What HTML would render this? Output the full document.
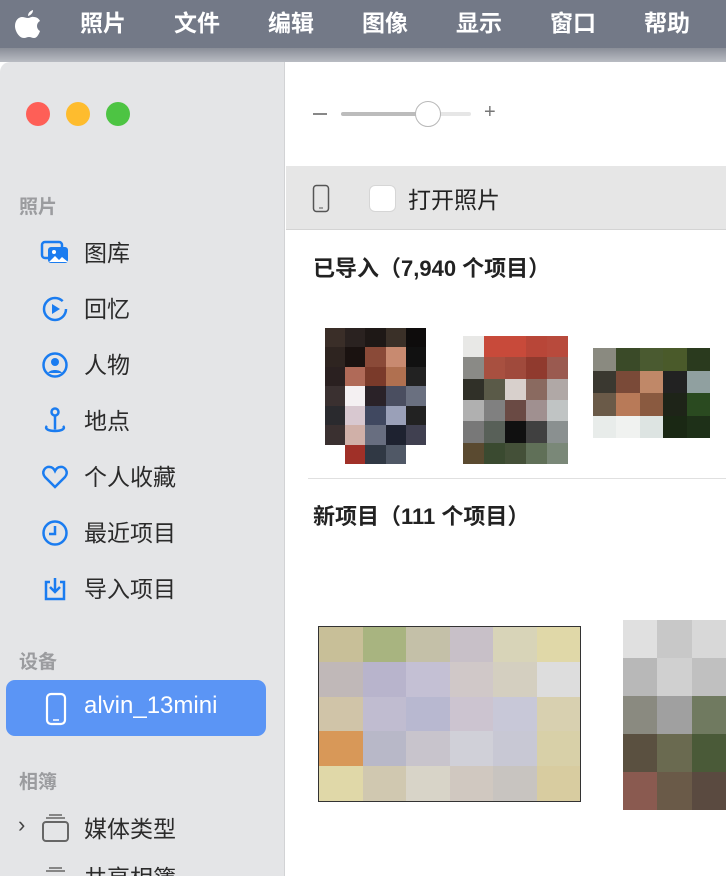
<!DOCTYPE html>
<html><head><meta charset="utf-8"><style>
*{margin:0;padding:0;box-sizing:border-box}
html,body{width:726px;height:876px;overflow:hidden}
body{position:relative;background:#fff;font-family:"Liberation Sans","Noto Sans CJK SC",sans-serif}
.menu{position:absolute;left:0;top:0;width:726px;height:48px;background:#737987;color:#fff;font-size:23px;font-weight:bold}
.menu span{position:absolute;top:4px}
.strip{position:absolute;left:0;top:48px;width:726px;height:14px;background:linear-gradient(#8a8e98,#b9bcc3)}
.side{position:absolute;left:0;top:62px;width:285px;height:814px;background:#e4e5e7;border-right:1px solid #d2d3d5;border-top-left-radius:10px}
.dot{position:absolute;top:102px;width:24px;height:24px;border-radius:50%}
.sec{position:absolute;left:19px;font-size:19px;color:#9b9c9f;font-weight:bold}
.item{position:absolute;left:84px;font-size:23px;color:#2b2b2b}
.ic{position:absolute;left:40px;width:30px;height:30px}
.main{position:absolute;left:286px;top:62px;width:440px;height:814px;background:#fff}
.bar{position:absolute;left:286px;top:166px;width:440px;height:64px;background:#e6e6e6;border-bottom:1px solid #d4d4d4}
h2{position:absolute;font-size:22px;font-weight:bold;color:#222}
.px{position:absolute;display:grid}
.px i{display:block}
</style></head><body>
<div class="menu">
<svg style="position:absolute;left:13px;top:8px" width="30" height="32" viewBox="0 0 30 32"><path fill="#fff" d="M20 2c0 3-2 5-5 6 0-3 2-5 5-6zM15 10c2 0 4-2 6-1 3 0 5 2 6 4-4 2-4 8 0 10-1 3-3 7-6 7-2 0-3-1-5-1s-3 1-5 1C6 30 2 23 2 18 2 12 6 9 9 9c2 0 4 1 6 1z"/></svg>
<span style="left:80px">照片</span><span style="left:174px">文件</span><span style="left:268px">编辑</span><span style="left:362px">图像</span><span style="left:456px">显示</span><span style="left:550px">窗口</span><span style="left:644px">帮助</span>
</div>
<div class="strip"></div>
<div class="side"></div>
<div class="dot" style="left:26px;background:#fe5f57"></div>
<div class="dot" style="left:66px;background:#febc2e"></div>
<div class="dot" style="left:106px;background:#4dc443"></div>
<div class="sec" style="top:192px">照片</div>
<svg class="ic" style="top:238px" viewBox="0 0 30 30"><rect x="2" y="4" width="20" height="16" rx="3" fill="none" stroke="#1a7cf0" stroke-width="2.5"/><rect x="8" y="9" width="20" height="16" rx="3" fill="#1a7cf0"/><circle cx="14" cy="14" r="2" fill="#fff"/><path d="M9 24l6-6 4 4 3-3 6 5z" fill="#fff"/></svg>
<div class="item" style="top:234px">图库</div>
<svg class="ic" style="top:294px" viewBox="0 0 30 30"><circle cx="15" cy="15" r="11" fill="none" stroke="#1a7cf0" stroke-width="2.5" stroke-dasharray="60 9"/><path d="M12 10v10l8-5z" fill="#1a7cf0"/></svg>
<div class="item" style="top:290px">回忆</div>
<svg class="ic" style="top:350px" viewBox="0 0 30 30"><circle cx="15" cy="15" r="11.5" fill="none" stroke="#1a7cf0" stroke-width="2.5"/><circle cx="15" cy="12" r="4" fill="#1a7cf0"/><path d="M8 23c2-4 12-4 14 0" fill="#1a7cf0"/></svg>
<div class="item" style="top:346px">人物</div>
<svg class="ic" style="top:406px" viewBox="0 0 30 30"><circle cx="15" cy="6" r="3.5" fill="none" stroke="#1a7cf0" stroke-width="2.5"/><path d="M15 9.5v14M7 20c-3 3 2 5 8 5s11-2 8-5" fill="none" stroke="#1a7cf0" stroke-width="2.5"/></svg>
<div class="item" style="top:402px">地点</div>
<svg class="ic" style="top:462px" viewBox="0 0 30 30"><path d="M15 25L5 15C1 10 5 4 10 5c2 0 4 2 5 4 1-2 3-4 5-4 5-1 9 5 5 10z" fill="none" stroke="#1a7cf0" stroke-width="2.5"/></svg>
<div class="item" style="top:458px">个人收藏</div>
<svg class="ic" style="top:518px" viewBox="0 0 30 30"><circle cx="15" cy="15" r="11.5" fill="none" stroke="#1a7cf0" stroke-width="2.5"/><path d="M15 8v8h-6" fill="none" stroke="#1a7cf0" stroke-width="2.5"/></svg>
<div class="item" style="top:514px">最近项目</div>
<svg class="ic" style="top:574px" viewBox="0 0 30 30"><path d="M10 8H6v17h18V8h-4M15 4v14M10 13l5 5 5-5" fill="none" stroke="#1a7cf0" stroke-width="2.5"/></svg>
<div class="item" style="top:570px">导入项目</div>
<div class="sec" style="top:647px">设备</div>
<div style="position:absolute;left:6px;top:680px;width:260px;height:56px;border-radius:9px;background:#5b95f5"></div>
<svg style="position:absolute;left:45px;top:692px" width="22" height="34" viewBox="0 0 22 34"><rect x="2" y="2" width="18" height="30" rx="4" fill="none" stroke="#fff" stroke-width="2.2"/><path d="M8 28h6" stroke="#fff" stroke-width="1.5"/></svg>
<div class="item" style="top:692px;color:#fff;font-size:24px">alvin_13mini</div>
<div class="sec" style="top:767px">相簿</div>
<div style="position:absolute;left:18px;top:812px;font-size:22px;color:#444">›</div>
<svg class="ic" style="top:813px;left:41px" viewBox="0 0 30 30"><rect x="2" y="9" width="25" height="19" rx="3" fill="none" stroke="#666" stroke-width="2"/><path d="M5 5h19M8 2h13" stroke="#666" stroke-width="1.6"/></svg>
<div class="item" style="top:810px">媒体类型</div>
<div class="item" style="top:859px">共享相簿</div>
<svg class="ic" style="top:866px;left:41px" viewBox="0 0 30 30"><path d="M5 5h19M8 2h13" stroke="#666" stroke-width="1.6"/></svg>

<div class="main"></div>
<div style="position:absolute;left:313px;top:113px;width:14px;height:1.5px;background:#888"></div>
<div style="position:absolute;left:341px;top:112px;width:90px;height:4px;border-radius:2px;background:#bcbcbc"></div>
<div style="position:absolute;left:431px;top:112px;width:40px;height:4px;border-radius:2px;background:#e6e6e6"></div>
<div style="position:absolute;left:415px;top:101px;width:26px;height:26px;border-radius:50%;background:#fff;border:1.5px solid #b8b8b8"></div>
<div style="position:absolute;left:484px;top:101px;font-size:20px;color:#777">+</div>
<div class="bar"></div>
<svg style="position:absolute;left:312px;top:184px" width="18" height="29" viewBox="0 0 18 29"><rect x="1.5" y="1.5" width="15" height="26" rx="3" fill="none" stroke="#555" stroke-width="1.5"/><path d="M7 24h4" stroke="#555"/></svg>
<div style="position:absolute;left:369px;top:185px;width:27px;height:27px;border-radius:6px;background:#fff;border:1px solid #d6d6d6"></div>
<div style="position:absolute;left:408px;top:181px;font-size:23px;color:#222">打开照片</div>
<h2 style="left:313px;top:251px">已导入（7,940 个项目）</h2>

<div class="px" style="left:325px;top:328px;width:101px;height:136px;grid-template-columns:repeat(5,1fr);grid-template-rows:repeat(7,1fr)">
<i style="background:#3a2e28"></i><i style="background:#2a2220"></i><i style="background:#1e1816"></i><i style="background:#3a3028"></i><i style="background:#0e0c0c"></i>
<i style="background:#2e2420"></i><i style="background:#1a1210"></i><i style="background:#8a4a38"></i><i style="background:#c88a70"></i><i style="background:#111"></i>
<i style="background:#2a2020"></i><i style="background:#b06a58"></i><i style="background:#7a3a2a"></i><i style="background:#b07050"></i><i style="background:#222"></i>
<i style="background:#3a3030"></i><i style="background:#f4f0f2"></i><i style="background:#2a2228"></i><i style="background:#4a4e60"></i><i style="background:#6a7080"></i>
<i style="background:#2a2a2e"></i><i style="background:#d8c8d0"></i><i style="background:#404860"></i><i style="background:#9aa0b8"></i><i style="background:#222"></i>
<i style="background:#3a3030"></i><i style="background:#d0b0a8"></i><i style="background:#686e80"></i><i style="background:#1e2230"></i><i style="background:#404050"></i>
<i style="background:#fff"></i><i style="background:#a03028"></i><i style="background:#303844"></i><i style="background:#505866"></i><i style="background:#fff"></i>
</div>
<div class="px" style="left:463px;top:336px;width:105px;height:128px;grid-template-columns:repeat(5,1fr);grid-template-rows:repeat(6,1fr)">
<i style="background:#e8e8e6"></i><i style="background:#c84a3a"></i><i style="background:#c84a3a"></i><i style="background:#b84638"></i><i style="background:#b84a3c"></i>
<i style="background:#8a8a86"></i><i style="background:#a85040"></i><i style="background:#a04a3c"></i><i style="background:#903a2e"></i><i style="background:#9a5a50"></i>
<i style="background:#303028"></i><i style="background:#5a5a48"></i><i style="background:#d8d0cc"></i><i style="background:#8a6a60"></i><i style="background:#b0a8a6"></i>
<i style="background:#b0b0b0"></i><i style="background:#808080"></i><i style="background:#6a4a44"></i><i style="background:#a09090"></i><i style="background:#c0c4c4"></i>
<i style="background:#787878"></i><i style="background:#586058"></i><i style="background:#101010"></i><i style="background:#404040"></i><i style="background:#8a9090"></i>
<i style="background:#5a4a30"></i><i style="background:#3a4a30"></i><i style="background:#445038"></i><i style="background:#607058"></i><i style="background:#7a8878"></i>
</div>
<div class="px" style="left:593px;top:348px;width:117px;height:90px;grid-template-columns:repeat(5,1fr);grid-template-rows:repeat(4,1fr)">
<i style="background:#8a8a80"></i><i style="background:#3a4a28"></i><i style="background:#4a5a30"></i><i style="background:#4a5a2a"></i><i style="background:#2a3a1e"></i>
<i style="background:#3a3830"></i><i style="background:#7a4a38"></i><i style="background:#c08868"></i><i style="background:#222"></i><i style="background:#90a0a0"></i>
<i style="background:#6a5a48"></i><i style="background:#b87a58"></i><i style="background:#8a5a40"></i><i style="background:#1e2418"></i><i style="background:#2a4a20"></i>
<i style="background:#e8ecea"></i><i style="background:#f0f2f0"></i><i style="background:#dde4e2"></i><i style="background:#1a2814"></i><i style="background:#1e3018"></i>
</div>
<div style="position:absolute;left:308px;top:478px;width:418px;height:1px;background:#e0e0e0"></div>
<h2 style="left:313px;top:499px">新项目（111 个项目）</h2>

<div class="px" style="left:318px;top:626px;width:263px;height:176px;grid-template-columns:repeat(6,1fr);grid-template-rows:repeat(5,1fr);border:1px solid #333">
<i style="background:#c8bf98"></i><i style="background:#a8b480"></i><i style="background:#c4c0a8"></i><i style="background:#c8c0c8"></i><i style="background:#d8d4b8"></i><i style="background:#e0d8a8"></i>
<i style="background:#c0b8b8"></i><i style="background:#b8b4cc"></i><i style="background:#c4c0d4"></i><i style="background:#d0c8c8"></i><i style="background:#d4cfc0"></i><i style="background:#ddd"></i>
<i style="background:#d0c4a8"></i><i style="background:#c0bcd0"></i><i style="background:#b8b8d0"></i><i style="background:#ccc4d0"></i><i style="background:#c8c8d8"></i><i style="background:#d8d0b0"></i>
<i style="background:#d89858"></i><i style="background:#b8b8c8"></i><i style="background:#c8c4cc"></i><i style="background:#d0d0d8"></i><i style="background:#c8c8d4"></i><i style="background:#d8d0a8"></i>
<i style="background:#e0d8a8"></i><i style="background:#d0c8b0"></i><i style="background:#d8d4c8"></i><i style="background:#d0c8c0"></i><i style="background:#c8c4c0"></i><i style="background:#d8cca0"></i>
</div>
<div class="px" style="left:623px;top:620px;width:103px;height:190px;grid-template-columns:repeat(3,1fr);grid-template-rows:repeat(5,1fr)">
<i style="background:#e0e0e0"></i><i style="background:#c8c8c8"></i><i style="background:#d8d8d8"></i>
<i style="background:#b8b8b8"></i><i style="background:#d0d0d0"></i><i style="background:#c0c0c0"></i>
<i style="background:#8a8a80"></i><i style="background:#a0a0a0"></i><i style="background:#707a60"></i>
<i style="background:#5a5040"></i><i style="background:#6a6a50"></i><i style="background:#4a5a38"></i>
<i style="background:#8a5a50"></i><i style="background:#6a5a48"></i><i style="background:#5a4a40"></i>
</div>
</body></html>
